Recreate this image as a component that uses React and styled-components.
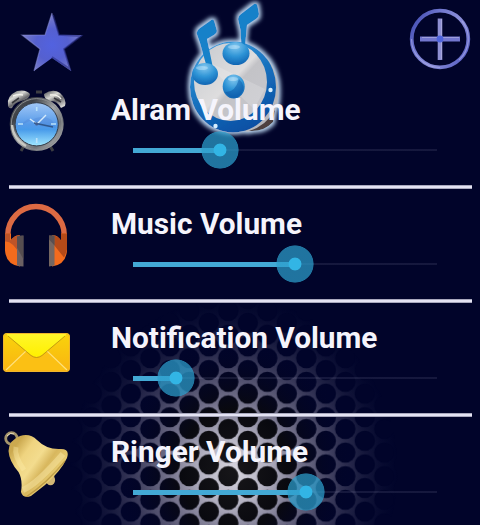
import React, { useState } from "react";
import styled, { createGlobalStyle } from "styled-components";

const GlobalStyle = createGlobalStyle`
  body {
    margin : 0;
    background-color : #01042a;
    overflow : hidden;
  }
`;

const Honeycomb = () => (
  <MeshSvg viewBox = "0 0 480 525" aria-hidden = "true">
    <defs>
      <pattern id = "holes" width = "39" height = "23.6" x = "208.8" y = "417.2" patternUnits = "userSpaceOnUse">
        <rect width = "39" height = "23.6" fill = "white"/>
        <g fill = "black">
          <circle cx = "19.5" cy = "11.8" r = "10.2"/>
          <circle cx = "0" cy = "0" r = "10.2"/>
          <circle cx = "39" cy = "0" r = "10.2"/>
          <circle cx = "0" cy = "23.6" r = "10.2"/>
          <circle cx = "39" cy = "23.6" r = "10.2"/>
        </g>
      </pattern>
      <mask id = "mesh"><rect width = "480" height = "525" fill = "url(#holes)"/></mask>
      <radialGradient id = "shine" gradientUnits = "userSpaceOnUse" cx = "0" cy = "0" r = "1" gradientTransform = "translate(234 470) scale(164 172)">
        <stop offset = "0" stopColor = "#d8d6df"/>
        <stop offset = "0.2" stopColor = "#b4b2c2"/>
        <stop offset = "0.4" stopColor = "#74728b"/>
        <stop offset = "0.6" stopColor = "#414161" stopOpacity = "0.95"/>
        <stop offset = "0.8" stopColor = "#202245" stopOpacity = "0.65"/>
        <stop offset = "1" stopColor = "#10143a" stopOpacity = "0"/>
      </radialGradient>
      <radialGradient id = "shade" gradientUnits = "userSpaceOnUse" cx = "0" cy = "0" r = "1" gradientTransform = "translate(234 470) scale(120 135)">
        <stop offset = "0" stopColor = "#171619"/>
        <stop offset = "0.45" stopColor = "#09090f"/>
        <stop offset = "1" stopColor = "#01042a" stopOpacity = "0"/>
      </radialGradient>
    </defs>
    <rect width = "480" height = "525" fill = "url(#shade)"/>
    <rect width = "480" height = "525" fill = "url(#shine)" mask = "url(#mesh)"/>
  </MeshSvg>
);

const StarIcon = () => (
  <svg width = "64" height = "62" viewBox = "0 0 64 62">
    <defs>
      <radialGradient id = "star" cx = "0.5" cy = "0.55" r = "0.5">
        <stop offset = "0" stopColor = "#5262e0"/>
        <stop offset = "0.55" stopColor = "#5560d0"/>
        <stop offset = "1" stopColor = "#777bc8"/>
      </radialGradient>
    </defs>
    <path d = "M32 2 L39 24 L62 24 L44 38 L51 60 L32 47 L14 60 L20 38 L2 24 L25 24 Z" fill = "url(#star)"/>
    <path d = "M33 4 L39 24 L61 25 L44 38 L50 58 L32 46" fill = "none" stroke = "#292e83" strokeWidth = "1.8" opacity = "0.6"/>
    <path d = "M32 2 L25 24 L2 24 L20 38 L14 60" fill = "none" stroke = "#9397e0" strokeWidth = "1.2" opacity = "0.5"/>
  </svg>
);

const PlusIcon = () => (
  <svg width = "62" height = "62" viewBox = "0 0 62 62" fill = "none">
    <defs>
      <linearGradient id = "ring" x1 = "0" y1 = "0.2" x2 = "1" y2 = "0.8">
        <stop offset = "0" stopColor = "#4650b5"/>
        <stop offset = "0.3" stopColor = "#7279d0"/>
        <stop offset = "0.6" stopColor = "#8b8ed8"/>
        <stop offset = "1" stopColor = "#5860c4"/>
      </linearGradient>
    </defs>
    <circle cx = "31" cy = "31" r = "28.3" stroke = "url(#ring)" strokeWidth = "3.8"/>
    <path d = "M53 13 A28.5 28.5 0 0 1 50 52 M31 59.5 A28.5 28.5 0 0 1 2.5 31" stroke = "#b1b0e8" strokeWidth = "1.2" opacity = "0.6"/>
    <path d = "M31 10.5 V52" stroke = "#8e8fd2" strokeWidth = "4.6"/>
    <path d = "M11 31 H51" stroke = "#7377cf" strokeWidth = "4.8"/>
    <path d = "M32.5 11 V51 M13 29.5 H50" stroke = "#b9b8e5" strokeWidth = "1" opacity = "0.6"/>
    <circle cx = "31" cy = "31" r = "3.4" fill = "#4d63dc"/>
  </svg>
);

const DrumLogo = () => (
  <LogoSvg viewBox = "0 0 110 140" aria-hidden = "true">
    <defs>
      <linearGradient id = "skin" x1 = "0" y1 = "0" x2 = "1" y2 = "1">
        <stop offset = "0" stopColor = "#c6c9ce"/>
        <stop offset = "0.5" stopColor = "#deddde"/>
        <stop offset = "0.56" stopColor = "#c3c3c7"/>
        <stop offset = "1" stopColor = "#c8c8ce"/>
      </linearGradient>
      <linearGradient id = "rim" x1 = "0.2" y1 = "0" x2 = "0.7" y2 = "1">
        <stop offset = "0" stopColor = "#3b9ddd"/>
        <stop offset = "0.5" stopColor = "#1670bd"/>
        <stop offset = "1" stopColor = "#0a4da2"/>
      </linearGradient>
      <radialGradient id = "ball" cx = "0.48" cy = "0.2" r = "0.85">
        <stop offset = "0" stopColor = "#83c7ef"/>
        <stop offset = "0.5" stopColor = "#2e94d6"/>
        <stop offset = "1" stopColor = "#0b5eae"/>
      </radialGradient>
      <filter id = "glow" x = "-20%" y = "-20%" width = "140%" height = "140%">
        <feMorphology in = "SourceAlpha" operator = "dilate" radius = "1.6"/>
        <feGaussianBlur stdDeviation = "2" result = "soft"/>
        <feFlood floodColor = "#bdd9f3"/>
        <feComposite in2 = "soft" operator = "in"/>
        <feMerge><feMergeNode/><feMergeNode in = "SourceGraphic"/></feMerge>
      </filter>
    </defs>
    <g filter = "url(#glow)">
      <path d = "M87 58 Q103 79 97 106 Q88 127 68 132 L49 127 Z" fill = "#b6b7bd"/>
      <path d = "M69 131 Q86 126 95 110 L93 122 Q84 132 69 131" fill = "#4d4040"/>
      <ellipse cx = "53" cy = "87" rx = "43" ry = "45.5" fill = "url(#rim)"/>
      <ellipse cx = "50.5" cy = "82" rx = "36.5" ry = "39" fill = "url(#skin)"/>
      <path d = "M20 58 L85 89 L74 109 Z" fill = "#fff" opacity = "0.18"/>
      <path d = "M26.5 66 L20 43 L16.5 33 Q17 30 20 28 L32 19.5 Q34 19 34.5 22 L37 31 Q37 33 34 35 L27 39 L33 68 Z" fill = "#1681c9"/>
      <path d = "M61.5 47 L60.5 30 L58 19 Q58 16 61 14 L74 4 Q77 3 77.5 6 L79 14 Q79 17 76 19 L67 25 L65 47 Z" fill = "#1681c9"/>
      <ellipse cx = "25" cy = "74" rx = "13" ry = "11" fill = "url(#ball)"/>
      <ellipse cx = "56" cy = "53.5" rx = "13.5" ry = "11.5" fill = "url(#ball)"/>
    </g>
    <ellipse cx = "53.7" cy = "86.5" rx = "11" ry = "12" fill = "url(#ball)"/>
    <path d = "M45 92 Q55 93 59 79 Q67 87 61 94 Q53 102 45 92" fill = "#0b55a6" opacity = "0.5"/>
    <g fill = "#d7efff">
      <circle cx = "90.5" cy = "90" r = "2.2"/>
      <circle cx = "35.5" cy = "126" r = "2.2"/>
      <ellipse cx = "54" cy = "47" rx = "6" ry = "2" opacity = "0.4"/>
      <ellipse cx = "22" cy = "68" rx = "6" ry = "2" opacity = "0.4"/>
      <ellipse cx = "53" cy = "79" rx = "5" ry = "2" opacity = "0.4"/>
    </g>
  </LogoSvg>
);

const ClockIcon = () => (
  <svg width = "72" height = "72" viewBox = "0 0 72 72">
    <defs>
      <linearGradient id = "steel" x1 = "0" y1 = "0" x2 = "1" y2 = "1">
        <stop offset = "0" stopColor = "#54575c"/>
        <stop offset = "0.25" stopColor = "#3e4146"/>
        <stop offset = "0.5" stopColor = "#a4a7a9"/>
        <stop offset = "0.7" stopColor = "#707377"/>
        <stop offset = "1" stopColor = "#d0d1d2"/>
      </linearGradient>
      <linearGradient id = "bellcap" x1 = "0" y1 = "0" x2 = "0.7" y2 = "1">
        <stop offset = "0" stopColor = "#45484b"/>
        <stop offset = "0.4" stopColor = "#d8d8d4"/>
        <stop offset = "0.65" stopColor = "#66666a"/>
        <stop offset = "1" stopColor = "#d2d2cf"/>
      </linearGradient>
      <linearGradient id = "face" x1 = "0" y1 = "0" x2 = "0" y2 = "1">
        <stop offset = "0" stopColor = "#a1c7f6"/>
        <stop offset = "0.5" stopColor = "#559ae9"/>
        <stop offset = "0.62" stopColor = "#489bea"/>
        <stop offset = "1" stopColor = "#a0e7ff"/>
      </linearGradient>
    </defs>
    <path d = "M36 9 H42 M24 63 L21 68 M50 63 L53 68" stroke = "#3c3d42" strokeWidth = "3"/>
    <path d = "M8 23 Q6 13 17 8 Q26 6 30 11 Q30 16 21 18 Q14 20 12 25 Q9 26 8 23" fill = "url(#bellcap)"/>
    <path d = "M44 11 Q53 5 60 10 Q67 16 65 23 L61 25 Q57 17 49 18 Q44 16 44 11" fill = "url(#bellcap)"/>
    <path d = "M13 13 Q18 11 23 12 M50 12 Q58 11 61 16" fill = "none" stroke = "#f5f4ed" strokeWidth = "1.4"/>
    <path d = "M12 20 L19 15 M54 15 L61 19" stroke = "#38383c" strokeWidth = "1.6"/>
    <circle cx = "36.7" cy = "41" r = "27" fill = "url(#steel)"/>
    <circle cx = "36.7" cy = "41" r = "25.4" fill = "none" stroke = "#8b8d90" strokeWidth = "1"/>
    <path d = "M12 42 A25 25 0 0 0 26 63" fill = "none" stroke = "#c8c8c2" strokeWidth = "2.4"/>
    <circle cx = "36.7" cy = "41.3" r = "21.6" fill = "url(#face)" stroke = "#343c48" strokeWidth = "1"/>
    <path d = "M17 44 L28 36 L40 43 L56 45 Q52 31 36 35 Z" fill = "#4778cd" opacity = "0.25"/>
    <path d = "M36.7 24 V28 M36.7 55 V60 M18 41 H23 M51 41 H56" stroke = "#b9e2fa" strokeWidth = "1.6"/>
    <path d = "M30 36 L37 41 L46 32" fill = "none" stroke = "#d5eafa" strokeWidth = "1.4"/>
    <path d = "M34 40 L53 44" stroke = "#30588c" strokeWidth = "1.3"/>
    <circle cx = "36.7" cy = "41" r = "1.6" fill = "#405e91"/>
  </svg>
);

const HeadphoneIcon = () => (
  <svg width = "72" height = "72" viewBox = "0 -2.5 72 72">
    <path d = "M7.7 42 V36 A28.3 29 0 0 1 64.3 36 V42" fill = "none" stroke = "#dc6a43" strokeWidth = "5.4"/>
    <path d = "M5 34 V51 Q6 65 20 67 V36 Q15 35 11 41 V34 Z" fill = "#f36b1d"/>
    <path d = "M67 34 V51 Q66 65 52 67 V36 Q57 35 61 41 V34 Z" fill = "#f36b1d"/>
    <path d = "M5 42 Q12 41 20 55 V36 Q14 36 10 41 V34 H5 Z" fill = "#bd5428"/>
    <path d = "M52 36 Q58 36 61 41 V34 H67 V50 Q66 54 64 58 L52 43 Z" fill = "#b54a18"/>
    <path d = "M17 37 Q19 36 23.5 36 V67 Q20 67 17 66 Z" fill = "#6b6163"/>
    <path d = "M49 36 H54.5 V66 L49 67 Z" fill = "#756761"/>
    <path d = "M17 37 L23.5 36 V60 L17 48 Z M49 36 H54.5 V46 L49 40 Z" fill = "#4d4649" opacity = "0.7"/>
  </svg>
);

const EnvelopeIcon = () => (
  <svg width = "72" height = "72" viewBox = "0 -6 72 72">
    <defs>
      <linearGradient id = "paper" x1 = "0" y1 = "0" x2 = "0" y2 = "1">
        <stop offset = "0" stopColor = "#f9d40b"/>
        <stop offset = "1" stopColor = "#f9b312"/>
      </linearGradient>
      <linearGradient id = "flap" x1 = "0" y1 = "0" x2 = "0" y2 = "1">
        <stop offset = "0" stopColor = "#fff62c"/>
        <stop offset = "1" stopColor = "#fff000"/>
      </linearGradient>
    </defs>
    <rect x = "3" y = "16" width = "67" height = "39" rx = "4" fill = "url(#paper)"/>
    <path d = "M6 53 L28 32 H45 L67 53" fill = "#fbc014" stroke = "#ffe17a" strokeWidth = "1.2"/>
    <path d = "M7 18 L31 38 Q36.5 42 42 38 L66 18 Q66 16 63 16 H10 Q7 16 7 18 Z" fill = "url(#flap)"/>
    <path d = "M8 19 L31 38.5 Q36.5 42.5 42 38.5 L65 19" fill = "none" stroke = "#b28b12" strokeWidth = "1" opacity = "0.75"/>
    <rect x = "3.5" y = "16.5" width = "66" height = "38" rx = "4" fill = "none" stroke = "#f0b52c"/>
  </svg>
);

const BellIcon = () => (
  <svg width = "72" height = "72" viewBox = "0 -2 72 72">
    <defs>
      <linearGradient id = "gold" x1 = "0.1" y1 = "0.2" x2 = "0.9" y2 = "0.8">
        <stop offset = "0" stopColor = "#cba94f"/>
        <stop offset = "0.2" stopColor = "#efd480"/>
        <stop offset = "0.42" stopColor = "#f3dc8e"/>
        <stop offset = "0.6" stopColor = "#d8b75e"/>
        <stop offset = "0.8" stopColor = "#e7cb70"/>
        <stop offset = "1" stopColor = "#ae8838"/>
      </linearGradient>
    </defs>
    <circle cx = "11.5" cy = "11.5" r = "5.8" fill = "none" stroke = "#a4946b" strokeWidth = "2.8"/>
    <path d = "M7 9 Q10 5 14 7" fill = "none" stroke = "#eee4c2" strokeWidth = "1"/>
    <ellipse cx = "50.5" cy = "53" rx = "4.6" ry = "5.2" fill = "#d2b775"/>
    <path d = "M8.5 24 Q9 13 20 9 Q30 6 37 13 Q47 23 61 22 Q70 22 67 31 Q61 44 45 58 L31 69 Q23 72 21 65 Q23 53 18.5 45 Q9 34 8.5 24 Z" fill = "url(#gold)"/>
    <path d = "M23 63 Q37 57 63 27" fill = "none" stroke = "#f8e5a3" strokeWidth = "6" opacity = "0.5"/>
    <path d = "M26 70 Q46 57 65 34" fill = "none" stroke = "#a27b2c" strokeWidth = "1.3" opacity = "0.55"/>
    <path d = "M16 20 Q14 29 24 43" fill = "none" stroke = "#fff0af" strokeWidth = "5" opacity = "0.35"/>
  </svg>
);

const channels = [
  { name : "Alram Volume", level : 86.5, Icon : ClockIcon },
  { name : "Music Volume", level : 161.5, Icon : HeadphoneIcon },
  { name : "Notification Volume", level : 43, Icon : EnvelopeIcon },
  { name : "Ringer Volume", level : 173, Icon : BellIcon },
];

const VolumeRow = ({ name, level, Icon }) => {
  const [ value, setValue ] = useState(level);

  return (
    <Row>
      <IconBox><Icon/></IconBox>
      <Control>
        <Title>{name}</Title>
        <Slider
          type = "range"
          min = "0"
          max = "304"
          step = "0.5"
          aria-label = {name}
          value = {value}
          onChange = {(e) => setValue(Number(e.target.value))}
          style = {{ "--level" : `${value}px` }}/>
      </Control>
    </Row>
  );
};

const App = () => {
  return (
    <Screen>
      <GlobalStyle/>
      <Honeycomb/>
      <DrumLogo/>
      <Header>
        <IconButton aria-label = "Favorite"><StarIcon/></IconButton>
        <IconButton aria-label = "Add"><PlusIcon/></IconButton>
      </Header>
      <RowList>
        {channels.map((channel) => (
          <VolumeRow key = {channel.name} {...channel}/>
        ))}
      </RowList>
    </Screen>
  );
};

const Screen = styled.main`
  position : relative;
  width : 480px;
  height : 525px;
  overflow : hidden;
  background-color : #01042a;
  font-family : Roboto, "Liberation Sans", sans-serif;
`;

const MeshSvg = styled.svg`
  position : absolute;
  inset : 0;
  width : 480px;
  height : 525px;
`;

const LogoSvg = styled.svg`
  position : absolute;
  left : 180px;
  top : 0;
  width : 110px;
  height : 140px;
`;

const Header = styled.header`
  position : relative;
  display : flex;
  justify-content : space-between;
  align-items : flex-start;
  box-sizing : border-box;
  height : 75px;
  padding : 8px 9px 0 20px;
`;

const IconButton = styled.button`
  display : flex;
  padding : 0;
  border : none;
  background : none;
  cursor : pointer;
  &:first-child {
    padding-top : 3px;
  }
`;

const RowList = styled.div`
  position : relative;
  display : flex;
  flex-direction : column;
`;

const Row = styled.section`
  display : flex;
  height : 114px;
  &:not(:last-child)::after {
    content : "";
    flex : none;
    align-self : flex-end;
    width : 463px;
    height : 4px;
    margin-left : -471px;
    margin-right : 8px;
    background-color : #e4e3f3;
    border-block : 0.5px solid #a8a8bd;
    box-sizing : border-box;
  }
`;

const IconBox = styled.div`
  flex : none;
  width : 111px;
  padding-top : 8px;
`;

const Control = styled.div`
  flex : none;
  width : 369px;
  padding-top : 17px;
  box-sizing : border-box;
`;

const Title = styled.h2`
  margin : 0;
  height : 39px;
  color : #f5f4fc;
  font-size : 29.8px;
  font-weight : 700;
  line-height : 35px;
  white-space : nowrap;
`;

/* the thumb is wider than its travel, so the track keeps 19px on each side */
const Slider = styled.input`
  appearance : none;
  display : block;
  width : 342px;
  height : 38px;
  margin : 0 0 0 3px;
  cursor : pointer;
  background :
    linear-gradient(#43a9d5, #43a9d5) 19px 50% / var(--level) 5px no-repeat,
    linear-gradient(#a5a5c620, #a5a5c620) 19px 50% / 304px 2px no-repeat;
  &::-webkit-slider-thumb {
    appearance : none;
    width : 38px;
    height : 38px;
    border-radius : 50%;
    background : radial-gradient(circle, #32b5e5 0 6px, #2c9fcdb8 6.8px 18.2px, transparent 19px);
  }
`;

export default App;
